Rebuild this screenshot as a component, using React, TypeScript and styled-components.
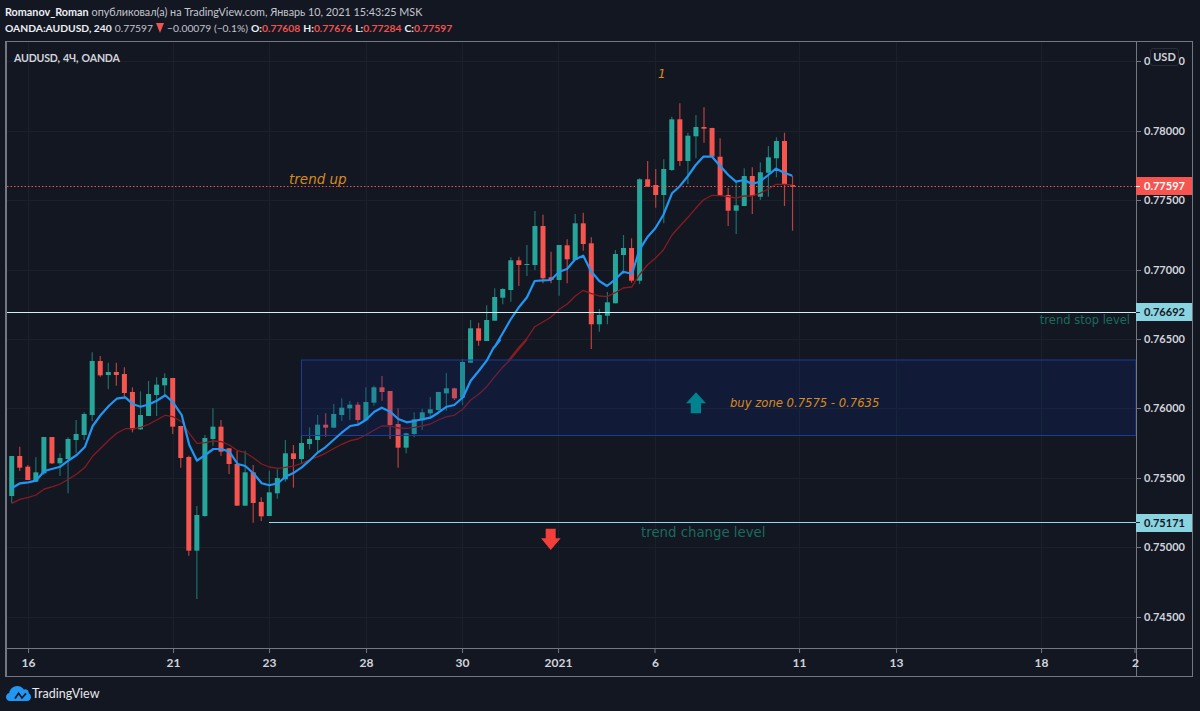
import React from "react";
import styled, { createGlobalStyle } from "styled-components";

const PLOT_X = 7;
const PLOT_Y = 42;
const PLOT_W = 1129;
const PLOT_H = 606;
const UI_FONT = `Lato, "Liberation Sans", sans-serif`;
const NOTE_FONT = `"DejaVu Sans", "Liberation Sans", sans-serif`;

const Global = createGlobalStyle`
  html, body { margin: 0; padding: 0; background: #131722; }
  #root { width: 1200px; height: 711px; overflow: hidden; }
`;

const Page = styled.div`
  width: 1200px;
  height: 711px;
  background: #131722;
  color: #d1d4dc;
  font-family: ${UI_FONT};
  font-size: 12px;
  display: flex;
  flex-direction: column;
`;
const Header = styled.header`
  height: 41px;
  padding: 4px 0 0 5px;
  box-sizing: border-box;
  display: flex;
  flex-direction: column;
  font-size: 10.8px;
`;
const HeaderLine = styled.div`
  height: 16px;
  line-height: 16px;
  white-space: nowrap;
  display: flex;
  align-items: center;
  gap: 3px;
`;
const SymbolLine = styled(HeaderLine)`
  font-size: 10.3px;
`;
const Strong = styled.b`
  color: #eceff4;
  font-weight: 700;
`;
const Muted = styled.span`
  color: #c3c6ce;
`;
const Down = styled.span`
  color: #ef5350;
`;
const Triangle = styled.i`
  width: 0;
  height: 0;
  border-left: 4.5px solid transparent;
  border-right: 4.5px solid transparent;
  border-top: 10px solid #ef5350;
`;
const ChartFrame = styled.section`
  width: 1188px;
  height: 636px;
  margin-left: 5px;
  box-sizing: border-box;
  border: 1px solid #74777f;
  border-left-width: 2px;
  display: grid;
  grid-template-columns: ${PLOT_W}px 1fr;
  grid-template-rows: ${PLOT_H}px 1fr;
`;
const Plot = styled.div`
  position: relative;
  overflow: hidden;
`;
const PlotSvg = styled.svg`
  display: block;
  width: ${PLOT_W}px;
  height: ${PLOT_H}px;
`;
const Legend = styled.div`
  position: absolute;
  left: 7px;
  top: 8px;
  font-size: 10.6px;
  letter-spacing: -0.2px;
  word-spacing: 1px;
  font-weight: 700;
  color: #d1d4dc;
  line-height: 16px;
`;
const Note = styled.span`
  position: absolute;
  white-space: nowrap;
  font-family: ${NOTE_FONT};
  line-height: 16px;
`;
const OrangeNote = styled(Note)`
  color: #d98a1c;
  font-style: italic;
`;
const TrendUp = styled(OrangeNote)`
  left: 282px;
  top: 129px;
  font-size: 13.5px;
`;
const WaveNumber = styled(OrangeNote)`
  left: 651px;
  top: 24px;
  font-size: 12px;
`;
const BuyZone = styled(OrangeNote)`
  left: 723px;
  top: 353px;
  font-size: 11.6px;
`;
const GreenNote = styled(Note)`
  color: #1a6b5e;
`;
const StopLevel = styled(GreenNote)`
  right: 6px;
  top: 270px;
  font-size: 11.5px;
`;
const ChangeLevel = styled(GreenNote)`
  left: 634px;
  top: 483px;
  font-size: 13.3px;
`;
const PriceAxis = styled.div`
  position: relative;
  border-left: 1px solid #74777f;
  font-size: 11px;
`;
const PriceRow = styled.div`
  position: absolute;
  left: 0;
  right: 0;
  height: 16px;
  margin-top: -8px;
  display: flex;
  align-items: center;
  gap: 3px;
  line-height: 16px;
  font-weight: 700;
  color: #d1d4dc;
`;
const Tick = styled.i`
  width: 4px;
  height: 1px;
  background: #74777f;
`;
const PriceTag = styled.div<{ $bg: string; $fg: string }>`
  position: absolute;
  left: -1px;
  right: 0;
  height: 18px;
  margin-top: -9px;
  background: ${(p) => p.$bg};
  color: ${(p) => p.$fg};
  font-weight: 700;
  display: flex;
  align-items: center;
  gap: 4px;
  line-height: 18px;
`;
const TagTick = styled.i<{ $color: string }>`
  width: 4px;
  height: 1px;
  background: ${(p) => p.$color};
`;
const CurrencyBadge = styled.div`
  position: absolute;
  left: 13px;
  top: 6px;
  width: 29px;
  height: 18px;
  box-sizing: border-box;
  text-align: center;
  line-height: 16px;
  background: #131722;
  border: 1px solid #2a2e39;
  border-radius: 3px;
  font-size: 11px;
  font-weight: 700;
  color: #d1d4dc;
`;
const TimeAxis = styled.div`
  position: relative;
  border-top: 1px solid #74777f;
`;
const TimeLabel = styled.span`
  position: absolute;
  top: 0;
  transform: translateX(-50%);
  display: flex;
  flex-direction: column;
  align-items: center;
  gap: 2px;
  font-weight: 700;
  color: #d1d4dc;
  line-height: 16px;
`;
const TimeTick = styled.i`
  width: 1px;
  height: 4px;
  background: #74777f;
`;
const AxisCorner = styled.div`
  border-left: 1px solid #74777f;
  border-top: 1px solid #74777f;
`;
const Footer = styled.footer`
  height: 34px;
  padding: 9px 0 0 6px;
  box-sizing: border-box;
  display: flex;
  align-items: flex-start;
  gap: 1px;
`;
const Brand = styled.span`
  color: #e6e8ec;
  font-size: 12.5px;
  line-height: 16px;
`;

type P = [number, number];
// reference crops were read at 3x; z() brings their readings back to page pixels
const z = (ox: number, oy: number, raw: number[][]): P[] =>
  raw.map(([a, b]) => [ox + a / 3, oy + b / 3]);

type C = [0 | 1, number, number, number, number];
const firstCandles: C[] = [
  [0,348,348,468,490],[1,320,348,383,393],[1,375,380,420,420],[0,352,397,425,425],[0,291,291,400,405],
  [1,291,291,370,372],[0,340,354,370,408],[0,292,297,357,460],[0,240,282,300,340],[0,217,222,285,300],
  [0,37,63,225,243],[1,48,63,106,110],[0,68,96,105,148],[1,68,96,105,137],[1,82,102,159,170],
  [1,142,156,268,277],[0,154,225,268,270],[0,123,162,228,228],[0,112,134,165,228],[0,100,114,136,165],
  [1,114,114,260,282],[1,258,258,354,383],[1,347,351,632,647],[0,498,525,632,777],[0,285,294,528,530],
  [0,205,260,297,317],[1,240,260,335,347],[1,325,325,372,402],[1,333,372,497,497],[0,332,397,497,497],
  [1,375,397,489,548],[1,472,486,529,543],[0,392,457,528,528],[0,388,414,460,476],[0,300,340,418,425],
  [1,315,340,357,443],[0,288,309,357,370],[0,262,297,312,328],[0,225,254,300,335],[1,220,254,263,290],
  [0,192,222,263,263],[0,175,203,225,243],[0,183,194,205,240],[1,186,194,240,250],[0,142,186,241,241],
  [0,137,142,188,197],[1,108,142,156,182],[1,153,153,255,297],[1,205,252,323,383],[0,278,280,323,340],
  [0,217,238,282,292],[0,206,217,241,270],[0,171,208,220,232],[0,155,156,210,215],[0,99,145,160,212],
  [1,143,145,175,180],[0,57,66,173,195],
];
const restCandles: C[] = [
  [0,320,328.3,362.7,363],[1,322.7,328.3,340.7,345.7],[0,305.3,320,341,341],[0,288.3,297,320.7,320.7],
  [0,288.3,289,297.7,304.3],[0,257.3,260.3,290,301.7],[1,256.7,260.3,265,286],[0,245,264,265,276],
  [0,211,226,265,270],[1,214.7,226,278.3,283.3],[1,251.7,277.3,280,283.3],[0,245,245,280,295.7],
  [1,239.3,245.3,259.3,283.3],[0,214,223.3,260,260],[1,212.7,223.3,244,250.7],[1,237.3,243.3,324.3,349],
  [0,309,315,324.3,331.7],[0,292,302.3,315.7,324.3],[0,250,254,303.3,303.3],[0,235,248,255,274],
  [1,238.3,248,280.7,282.7],[0,178.3,179.3,280.7,284],[1,161,179.3,186.7,186.7],[1,169,185,195,207.7],
  [0,159.3,169,195,223.3],[0,116.7,119.3,170,170.7],[1,103.3,119.3,161,166],[0,132.7,135.7,161,184],
  [0,115,127,136.3,158.3],[1,107.3,127,128.7,142.7],[1,127.7,128,156.7,156.7],[1,138.3,156.7,195.7,195.7],
  [1,187.7,195,210.7,226],[0,181.7,205.3,210.7,234],[0,168.3,176,206,206],[1,167.3,176,196,214],
  [0,162.3,172.3,196.7,200],[0,146,157.3,172.7,196.7],[0,137.3,141,158.3,177.3],[1,132.7,141,185,206],
  [1,176,185,186.7,230.7],
];
const candles: C[] = [
  ...firstCandles.map(([k, a, b, c, d]) => [k, 340 + a / 3, 340 + b / 3, 340 + c / 3, 340 + d / 3] as C),
  ...restCandles,
];

const blue: P[] = [
  ...z(0, 340, [[35,445],[60,430],[85,427],[108,422],[133,393],[158,386],[181,380],[205,362],[230,345],[255,320],[278,258],[302,225],[327,197],[350,176],[376,172],[400,193],[422,200],[448,193],[470,182],[496,166],[519,187],[545,225],[568,315],[591,362],[616,345],[640,327],[665,327],[688,335],[713,372],[736,378],[760,400],[785,430],[808,436],[834,430]]),
  ...z(280, 340, [[16,410],[42,398],[65,382],[88,362],[114,337],[136,322],[163,298],[185,278],[211,258],[234,254],[257,240],[283,215],[305,203],[331,215],[355,237],[380,247],[403,243],[426,238],[451,233],[475,218],[500,200],[523,195],[549,172],[572,122],[596,93],[620,62],[640,25],[660,0]]),
  ...z(450, 200, [[134,440],[158,400],[181,360],[208,320],[231,292],[254,243],[280,241],[302,240],[328,215],[351,207],[376,178],[400,167],[422,212],[448,243],[471,258],[496,238],[519,215],[545,221]]),
  ...z(620, 90, [[36,552],[58,480],[82,442],[106,415],[130,375],[156,310],[178,290],[204,258],[227,225],[250,200],[276,200],[298,225],[325,255],[348,275],[373,270],[396,282],[419,275],[445,255],[468,236],[493,248],[517,257]]),
];
const red: P[] = [
  ...z(0, 340, [[35,490],[60,478],[85,472],[108,465],[133,447],[158,440],[181,432],[205,418],[230,402],[255,382],[278,348],[302,325],[327,300],[350,280],[376,266],[400,266],[422,262],[448,252],[470,240],[496,226],[519,230],[545,245],[568,280],[591,310],[616,308],[640,303],[665,305],[688,315],[713,332],[736,338],[760,353],[785,372],[808,381],[834,385]]),
  ...z(280, 340, [[16,382],[42,378],[65,370],[88,360],[114,350],[136,340],[163,325],[185,313],[211,302],[234,297],[257,285],[283,270],[305,258],[331,258],[355,264],[380,265],[403,262],[426,258],[451,252],[475,240],[500,230],[523,226],[549,207],[572,180],[596,163],[620,140],[640,115],[665,85],[690,60],[715,30],[740,0]]),
  ...z(450, 200, [[176,480],[208,440],[231,415],[254,380],[280,365],[302,352],[328,328],[351,313],[376,288],[400,271],[422,280],[448,288],[471,290],[496,278],[519,264],[545,261]]),
  ...z(620, 90, [[36,590],[58,555],[82,525],[106,505],[130,480],[156,435],[178,410],[204,382],[227,355],[250,330],[276,316],[298,317],[325,320],[348,324],[373,318],[396,318],[419,310],[445,297],[468,283],[493,283],[517,285]]),
];
const toPoints = (pts: P[]) => pts.map(([x, y]) => `${x.toFixed(1)},${y.toFixed(1)}`).join(" ");

const priceLevels: [string, number][] = [
  ["0.78500", 61], ["0.78000", 131], ["0.77500", 200], ["0.77000", 270],
  ["0.76500", 339], ["0.76000", 408], ["0.75500", 478], ["0.75000", 547], ["0.74500", 617],
];
const gridX = [28, 173, 269, 366, 462, 558, 655, 799, 896, 1041];
const timeLabels: [string, number][] = [
  ["16", 28], ["21", 173], ["23", 269], ["28", 366], ["30", 462], ["2021", 558],
  ["6", 655], ["11", 799], ["13", 896], ["18", 1041], ["2", 1135],
];

const GREEN = "#26a69a";
const RED = "#f6544f";

function Chart() {
  return (
    <PlotSvg viewBox={`${PLOT_X} ${PLOT_Y} ${PLOT_W} ${PLOT_H}`}>
      {priceLevels.map(([label, y]) => (
        <line key={label} x1={PLOT_X} x2={1136} y1={y + 0.5} y2={y + 0.5} stroke="#1c202b" />
      ))}
      {gridX.map((x) => (
        <line key={x} x1={x + 0.5} x2={x + 0.5} y1={PLOT_Y} y2={648} stroke="#1c202b" />
      ))}
      {candles.map(([k, hi, top, bot, lo], i) => {
        const x = 11.7 + 8.05 * i;
        return (
          <g key={i}>
            <line x1={x} x2={x} y1={hi} y2={lo} stroke={k ? "#b8413f" : "#1c6f6a"} strokeWidth={1.2} />
            <rect x={x - 2.5} y={top} width={5} height={Math.max(bot - top, 1)} fill={k ? RED : GREEN} />
          </g>
        );
      })}
      <polyline points={toPoints(red)} fill="none" stroke="#861c21" strokeWidth={1.3} strokeLinejoin="round" />
      <rect x={301.5} y={360} width={834.5} height={75.5} fill="#0e2e86" fillOpacity={0.22} stroke="#1a3a96" strokeWidth={1} />
      <polyline points={toPoints(blue)} fill="none" stroke="#2196f3" strokeWidth={2.2} strokeLinejoin="round" />
      <line x1={PLOT_X} x2={1136} y1={186.5} y2={186.5} stroke="#ef5350" strokeDasharray="1.5 2" />
      <line x1={PLOT_X} x2={1136} y1={312.5} y2={312.5} stroke="#d4eff3" />
      <line x1={269} x2={1136} y1={522.5} y2={522.5} stroke="#8fdbe6" />
      <polygon points="696,392.3 706,403.3 701,403.3 701,413.3 690.7,413.3 690.7,403.3 686,403.3" fill="#00838f" />
      <polygon points="545.7,528.7 555.7,528.7 555.7,538.3 560.7,538.3 550.7,550 541,538.3 545.7,538.3" fill="#f23f3a" />
    </PlotSvg>
  );
}

function Logo() {
  return (
    <svg width="25" height="15" viewBox="0 0 25 15" aria-hidden="true">
      <path
        d="M4 15C1.6 15 0 13.3 0 11C0 9 1.3 7.5 3.2 7C3.8 3 7.2 0 11.3 0C14.2 0 16.6 1.4 18 3.7C18.8 3.3 19.6 3.2 20.3 3.4C22 3.9 22.8 5.3 22.8 7.2C24.2 8 25 9.4 25 11C25 13.3 23.3 15 21 15Z"
        fill="#2196f3"
      />
      <polyline points="9,12.5 12.6,7.2 16,12 20,7.4" fill="none" stroke="#131722" strokeWidth="1.7" />
    </svg>
  );
}

export default function App() {
  return (
    <Page>
      <Global />
      <Header>
        <HeaderLine>
          <Strong>Romanov_Roman</Strong>
          <Muted>опубликовал(а) на TradingView.com, Январь 10, 2021 15:43:25 MSK</Muted>
        </HeaderLine>
        <SymbolLine>
          <Strong>OANDA:AUDUSD, 240</Strong>
          <Muted>0.77597</Muted>
          <Triangle />
          <Muted>−0.00079 (−0.1%)</Muted>
          <Strong>O:<Down>0.77608</Down></Strong>
          <Strong>H:<Down>0.77676</Down></Strong>
          <Strong>L:<Down>0.77284</Down></Strong>
          <Strong>C:<Down>0.77597</Down></Strong>
        </SymbolLine>
      </Header>
      <ChartFrame>
        <Plot>
          <Chart />
          <Legend>AUDUSD, 4Ч, OANDA</Legend>
          <WaveNumber>1</WaveNumber>
          <TrendUp>trend up</TrendUp>
          <StopLevel>trend stop level</StopLevel>
          <BuyZone>buy zone 0.7575 - 0.7635</BuyZone>
          <ChangeLevel>trend change level</ChangeLevel>
        </Plot>
        <PriceAxis>
          {priceLevels.map(([label, y]) => (
            <PriceRow key={label} style={{ top: y - PLOT_Y }}>
              <Tick />
              {label}
            </PriceRow>
          ))}
          <PriceTag $bg="#f6544f" $fg="#ffffff" style={{ top: 186 - PLOT_Y }}>
            <TagTick $color="#ffffff" />0.77597
          </PriceTag>
          <PriceTag $bg="#8ad3e0" $fg="#131722" style={{ top: 312 - PLOT_Y }}>
            <TagTick $color="#131722" />0.76692
          </PriceTag>
          <PriceTag $bg="#8ad3e0" $fg="#131722" style={{ top: 522.5 - PLOT_Y }}>
            <TagTick $color="#131722" />0.75171
          </PriceTag>
          <CurrencyBadge>USD</CurrencyBadge>
        </PriceAxis>
        <TimeAxis>
          {timeLabels.map(([label, x]) => (
            <TimeLabel key={label} style={{ left: x - PLOT_X + 0.5 }}>
              <TimeTick />
              {label}
            </TimeLabel>
          ))}
        </TimeAxis>
        <AxisCorner />
      </ChartFrame>
      <Footer>
        <Logo />
        <Brand>TradingView</Brand>
      </Footer>
    </Page>
  );
}
